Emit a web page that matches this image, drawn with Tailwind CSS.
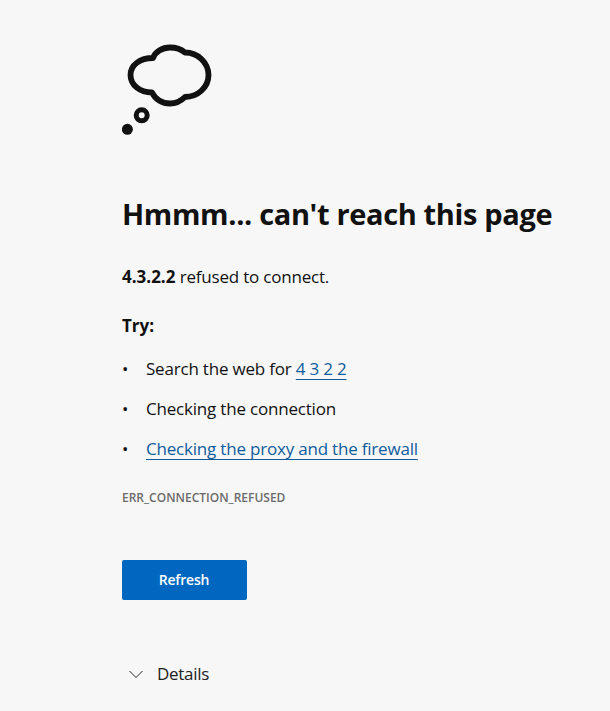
<!DOCTYPE html>
<html lang="en">
<head>
  <meta charset="UTF-8" />
  <title>Can't reach this page</title>
  <script src="https://cdn.jsdelivr.net/npm/@tailwindcss/browser@4"></script>
  <meta name="viewport" content="width=device-width, initial-scale=1.0" />
</head>
<body class="bg-[#f7f7f7] h-[711px] overflow-hidden font-['Open_Sans',sans-serif] text-[#111111]">
  <main class="pl-[122px] pt-[40px]">
    <svg class="block w-[100px] h-[100px]" viewBox="0 0 100 100" fill="none">
      <path d="M31 18C33 12 40 7.5 48 7.5C54 7.5 59 9 63 12.5C76 12.5 86.5 23 86.5 35C86.5 47 76 57 63 57C59 61 54 63.5 48 63.5C40 63.5 33 59 30 52.5C18 52.5 8.5 45 8.5 35C8.5 25 18 18 31 18Z" stroke="#111111" stroke-width="5.8" stroke-linejoin="round" />
      <circle cx="19.7" cy="75.3" r="5.5" stroke="#111111" stroke-width="5" />
      <circle cx="5.4" cy="89.3" r="5.5" fill="#111111" />
    </svg>

    <h1 class="mt-[54px] text-[29px] leading-[40px] font-bold whitespace-nowrap tracking-[-0.35px]">Hmmm... can't reach this page</h1>

    <p class="mt-[31px] text-[17px] leading-[24px] tracking-[-0.2px]"><strong class="font-bold tracking-normal">4.3.2.2</strong> refused to connect.</p>

    <p class="mt-[25px] text-[17px] leading-[24px] font-bold">Try:</p>

    <ul class="mt-[19px] flex flex-col gap-[16px] text-[17px] leading-[24px] tracking-[-0.2px]">
      <li class="flex"><span class="w-[24px]">•</span><span>Search the web for <a href="#" class="text-[#0f5c9c] underline decoration-1 underline-offset-[4px] [text-decoration-skip-ink:none]">4 3 2 2</a></span></li>
      <li class="flex"><span class="w-[24px]">•</span><span>Checking the connection</span></li>
      <li class="flex"><span class="w-[24px]">•</span><a href="#" class="text-[#0f5c9c] underline decoration-1 underline-offset-[4px] [text-decoration-skip-ink:none]">Checking the proxy and the firewall</a></li>
    </ul>

    <p class="mt-[29px] text-[12px] leading-[16px] font-semibold text-[#6b6b6b]">ERR_CONNECTION_REFUSED</p>

    <button class="block mt-[54px] w-[125px] h-[40px] pb-[1px] pr-[1px] rounded-[2px] bg-[#0067c0] text-white text-[14px] font-semibold tracking-[-0.2px]">Refresh</button>

    <div class="mt-[62px] flex items-center text-[17px] leading-[24px] text-[#222222] tracking-[-0.3px]">
      <svg class="ml-[7px] w-[14px] h-[10px]" viewBox="0 0 14 10" fill="none"><path d="M0.5 2L7 8.5L13.5 2" stroke="#222222" stroke-width="1" /></svg>
      <span class="ml-[14px]">Details</span>
    </div>
  </main>
</body>
</html>
